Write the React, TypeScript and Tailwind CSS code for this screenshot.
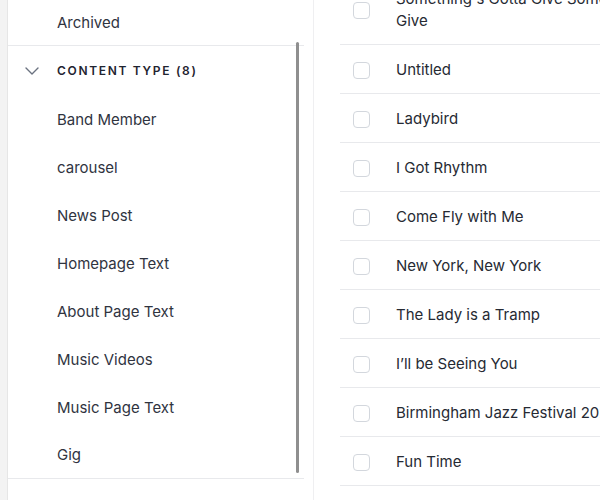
import { ChevronDown } from 'lucide-react';

const contentTypes = [
  'Band Member',
  'carousel',
  'News Post',
  'Homepage Text',
  'About Page Text',
  'Music Videos',
  'Music Page Text',
  'Gig',
];

const entries = [
  "Something's Gotta Give Something's Gotta Give",
  'Untitled',
  'Ladybird',
  'I Got Rhythm',
  'Come Fly with Me',
  'New York, New York',
  'The Lady is a Tramp',
  'I’ll be Seeing You',
  'Birmingham Jazz Festival 2023',
  'Fun Time',
];

export default function App() {
  return (
    <div className="flex h-[500px] w-[600px] overflow-hidden bg-white font-['Inter','Liberation_Sans',sans-serif] text-[15px] text-[#30343f]">
      {/* outer gutter */}
      <div className="w-[8px] shrink-0 border-r border-[#e6e6e6] bg-[#f3f3f3]" />

      {/* filter sidebar */}
      <div className="relative w-[296px] shrink-0">
        <div className="flex h-[46px] items-center border-b border-[#e8e9ec] pl-[49px] pt-[2px]">Archived</div>
        <div className="flex h-[49px] items-center pl-[12px] pt-[1px]">
          <ChevronDown size={24} strokeWidth={1.4} className="text-[#6b7280]" />
          <span className="ml-[13px] text-[12px] font-semibold uppercase tracking-[0.14em] text-[#1f2430]">
            Content Type (8)
          </span>
        </div>
        {contentTypes.map((name, i) => (
          <div
            key={name}
            className={`flex h-[48px] items-center pl-[49px] pt-[2px] ${i === contentTypes.length - 1 ? 'border-b border-[#e8e9ec]' : ''}`}
          >
            {name}
          </div>
        ))}
        {/* overlay scrollbar */}
        <div className="absolute right-[5px] top-[42px] h-[431px] w-[3px] rounded-full bg-[#8f8f8f]" />
      </div>

      <div className="w-[9px] shrink-0" />

      {/* entry list */}
      <div className="flex-1 overflow-hidden border-l border-[#efeff1] pl-[26px]">
        <div className="-mt-[26px]">
          {entries.map((title, i) => (
            <div key={i} className="flex items-center border-b border-[#e8e9ec] pb-[12px] pl-[13px] pt-[14px]">
              <div className="h-[17px] w-[17px] shrink-0 rounded-[4px] border-[1.5px] border-[#d3d7dd] bg-white" />
              <span
                className={`ml-[26px] shrink-0 leading-[22px] text-[#262a33] ${i === 0 ? 'w-[335px]' : 'whitespace-nowrap'}`}
              >
                {title}
              </span>
            </div>
          ))}
        </div>
      </div>
    </div>
  );
}
